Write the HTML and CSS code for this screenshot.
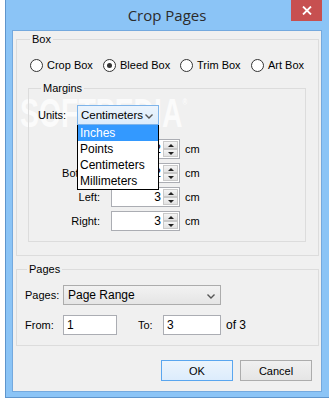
FILE: index.html
```html
<!DOCTYPE html>
<html lang="en">
    <head>
        <meta charset="UTF-8">
        <title>Crop Pages</title>
        <link rel="stylesheet" href="styles.css">
    </head>
    <body>
        <div class="window">
            <div class="titlebar">
                <span class="title">Crop Pages</span>
                <button class="close-btn">
                    <svg width="10" height="9" viewBox="0 0 10 9"><path d="M1 0.5 L9 8.5 M9 0.5 L1 8.5" stroke="#fff" stroke-width="1.8"/></svg>
                </button>
            </div>
            <div class="client">
                <div class="watermark">SOFTPEDIA<span class="reg">®</span></div>

                <fieldset class="group box-group">
                    <legend>Box</legend>
                    <div class="radios">
                        <label class="radio"><span class="dot"></span>Crop Box</label>
                        <label class="radio"><span class="dot checked"></span>Bleed Box</label>
                        <label class="radio"><span class="dot"></span>Trim Box</label>
                        <label class="radio"><span class="dot"></span>Art Box</label>
                    </div>

                    <fieldset class="group margins-group">
                        <legend>Margins</legend>
                        <div class="units-row">
                            <span class="units-label">Units:</span>
                            <div class="dropdown">
                                <div class="select select-open">
                                    Centimeters
                                    <svg class="chevron" width="8" height="5" viewBox="0 0 8 5"><path d="M0.5 0.5 L4 4 L7.5 0.5" fill="none" stroke="#555" stroke-width="1.4"/></svg>
                                </div>
                                <ul class="list">
                                    <li class="active">Inches</li>
                                    <li>Points</li>
                                    <li>Centimeters</li>
                                    <li>Millimeters</li>
                                </ul>
                            </div>
                        </div>
                        <div class="spin-rows">
                            <div class="spin-row">
                                <span class="row-label">Top:</span>
                                <div class="spin"><span class="spin-value">2</span><span class="spin-btns"><span class="spin-btn up"></span><span class="spin-btn down"></span></span></div>
                                <span class="unit">cm</span>
                            </div>
                            <div class="spin-row">
                                <span class="row-label">Bottom:</span>
                                <div class="spin"><span class="spin-value">2</span><span class="spin-btns"><span class="spin-btn up"></span><span class="spin-btn down"></span></span></div>
                                <span class="unit">cm</span>
                            </div>
                            <div class="spin-row">
                                <span class="row-label">Left:</span>
                                <div class="spin"><span class="spin-value">3</span><span class="spin-btns"><span class="spin-btn up"></span><span class="spin-btn down"></span></span></div>
                                <span class="unit">cm</span>
                            </div>
                            <div class="spin-row">
                                <span class="row-label">Right:</span>
                                <div class="spin"><span class="spin-value">3</span><span class="spin-btns"><span class="spin-btn up"></span><span class="spin-btn down"></span></span></div>
                                <span class="unit">cm</span>
                            </div>
                        </div>
                    </fieldset>
                </fieldset>

                <fieldset class="group pages-group">
                    <legend>Pages</legend>
                    <div class="pages-row">
                        <span class="pages-label">Pages:</span>
                        <div class="select pages-select">
                            Page Range
                            <svg class="chevron" width="8" height="5" viewBox="0 0 8 5"><path d="M0.5 0.5 L4 4 L7.5 0.5" fill="none" stroke="#555" stroke-width="1.4"/></svg>
                        </div>
                    </div>
                    <div class="range-row">
                        <span class="pages-label">From:</span>
                        <div class="text-input from-input">1</div>
                        <span class="to-label">To:</span>
                        <div class="text-input to-input">3</div>
                        <span class="of-label">of 3</span>
                    </div>
                </fieldset>

                <div class="buttons">
                    <button class="btn btn-default">OK</button>
                    <button class="btn">Cancel</button>
                </div>
            </div>
        </div>
    </body>
</html>
```
FILE: styles.css
```css
* {
    box-sizing: border-box;
}

body {
    margin: 0;
    background-color: #ffffff;
    font-family: "Liberation Sans", Arial, sans-serif;
    font-size: 11px;
    color: #000000;
}

.window {
    margin-left: 5px;
    width: 324px;
    height: 398px;
    padding: 0 8px 6px 7px;
    background-color: #8bc4f6;
    border-left: 1px solid #5f95cc;
    border-bottom: 1px solid #5f95cc;
    display: flex;
    flex-direction: column;
}

.titlebar {
    position: relative;
    height: 31px;
    display: flex;
    align-items: center;
    justify-content: center;
    padding-bottom: 1px;
}

.title {
    font-family: "Open Sans", "Noto Sans", sans-serif;
    font-size: 15px;
    color: #2b2b2b;
}

.close-btn {
    position: absolute;
    top: 0;
    right: -1px;
    width: 31px;
    height: 21px;
    border: none;
    padding: 0;
    background-color: #c75050;
    display: flex;
    align-items: center;
    justify-content: center;
}

.client {
    position: relative;
    height: 360px;
    background-color: #f0f0f0;
    box-shadow: 0 0 0 1px #74a9de;
    padding: 1px 2px 0 3px;
    display: flex;
    flex-direction: column;
}

.watermark {
    position: absolute;
    left: 7px;
    top: 66px;
    font-family: "Liberation Sans", sans-serif;
    font-weight: bold;
    font-size: 40px;
    line-height: 32px;
    color: rgba(255, 255, 255, 0.75);
    transform: scaleX(0.71);
    transform-origin: left top;
    white-space: nowrap;
}

.reg {
    font-size: 9px;
    vertical-align: top;
    line-height: 10px;
}

/* group boxes */
.group {
    position: relative;
    margin: 0;
    padding: 0;
    border: 1px solid #dcdcdc;
    min-width: 0;
}

.group legend {
    padding: 0 2px;
    margin-left: 2px;
    line-height: 14px;
    height: 14px;
}

.box-group {
    padding: 11px 12px 13px 11px;
}

.radios {
    display: grid;
    grid-template-columns: 73px 77px 71px auto;
    height: 16px;
    padding-left: 2px;
    margin-bottom: 8px;
}

.radio {
    display: flex;
    align-items: center;
    gap: 4px;
    white-space: nowrap;
}

.dot {
    width: 13px;
    height: 13px;
    border: 1px solid #333333;
    border-radius: 50%;
    background-color: #ffffff;
    display: flex;
    align-items: center;
    justify-content: center;
}

.dot.checked::after {
    content: "";
    width: 5px;
    height: 5px;
    border-radius: 50%;
    background-color: #333333;
}

.margins-group {
    padding: 10px 9px 10px 9px;
}

.margins-group legend {
    margin-left: 3px;
}

.units-row {
    display: flex;
    align-items: center;
    height: 20px;
    margin-bottom: 14px;
}

.units-label {
    width: 39px;
}

.dropdown {
    position: relative;
    z-index: 2;
}

.select {
    position: relative;
    height: 20px;
    border: 1px solid #acacac;
    background: linear-gradient(#f2f2f2, #e5e5e5);
    padding-left: 4px;
    display: flex;
    align-items: center;
    font-size: 12px;
}

.select-open {
    width: 82px;
    padding-left: 3px;
    border-color: #7eb4ea;
    background: linear-gradient(#ecf4fc, #dcecfc);
    font-size: 11.5px;
}

.chevron {
    position: absolute;
    right: 5px;
    top: 8px;
}

.list {
    position: absolute;
    top: 20px;
    left: 0;
    width: 82px;
    margin: 0;
    padding: 0;
    list-style: none;
    background-color: #ffffff;
    border: 1px solid #000000;
    border-top: none;
    font-size: 12px;
}

.list li {
    height: 16px;
    line-height: 16px;
    padding-left: 2px;
}

.list li.active {
    background-color: #3399ff;
    color: #ffffff;
}

.spin-rows {
    display: flex;
    flex-direction: column;
    gap: 4px;
}

.spin-row {
    display: flex;
    align-items: center;
    height: 20px;
}

.row-label {
    width: 62px;
    text-align: right;
}

.spin {
    width: 69px;
    height: 20px;
    margin-left: 11px;
    border: 1px solid #abadb3;
    background-color: #ffffff;
    display: flex;
}

.spin-value {
    flex: 1;
    text-align: right;
    padding-right: 1px;
    line-height: 18px;
    font-size: 12px;
}

.spin-btns {
    width: 17px;
    display: flex;
    flex-direction: column;
    padding: 1px;
}

.spin-btn {
    flex: 1;
    border: 1px solid #c9c9c9;
    background: linear-gradient(#f4f4f4, #e2e2e2);
    display: flex;
    align-items: center;
    justify-content: center;
}

.spin-btn.up::after {
    content: "";
    border-left: 3px solid transparent;
    border-right: 3px solid transparent;
    border-bottom: 3px solid #222222;
}

.spin-btn.down::after {
    content: "";
    border-left: 3px solid transparent;
    border-right: 3px solid transparent;
    border-top: 3px solid #222222;
}

.unit {
    margin-left: 5px;
}

/* pages */
.pages-group {
    margin-top: 6px;
    padding: 9px 8px 10px 8px;
}

.pages-row,
.range-row {
    display: flex;
    align-items: center;
    height: 20px;
}

.pages-row {
    margin-bottom: 10px;
}

.pages-label {
    width: 38px;
}

.pages-select {
    width: 158px;
}

.text-input {
    height: 20px;
    border: 1px solid #abadb3;
    background-color: #ffffff;
    padding-left: 3px;
    line-height: 18px;
    font-size: 12px;
}

.from-input {
    width: 54px;
}

.to-label {
    margin-left: 21px;
    width: 25px;
}

.to-input {
    width: 58px;
}

.of-label {
    margin-left: 5px;
    font-size: 12px;
}

.buttons {
    display: flex;
    justify-content: flex-end;
    gap: 7px;
    margin-top: 14px;
    padding-right: 7px;
}

.btn {
    width: 72px;
    height: 21px;
    border: 1px solid #acacac;
    background: linear-gradient(#f0f0f0, #e5e5e5);
    font-family: "Liberation Sans", Arial, sans-serif;
    font-size: 11px;
    color: #000000;
    padding: 0;
}

.btn-default {
    border-color: #5aa6ef;
    background: linear-gradient(#ecf4fc, #dcecfc);
}
```
